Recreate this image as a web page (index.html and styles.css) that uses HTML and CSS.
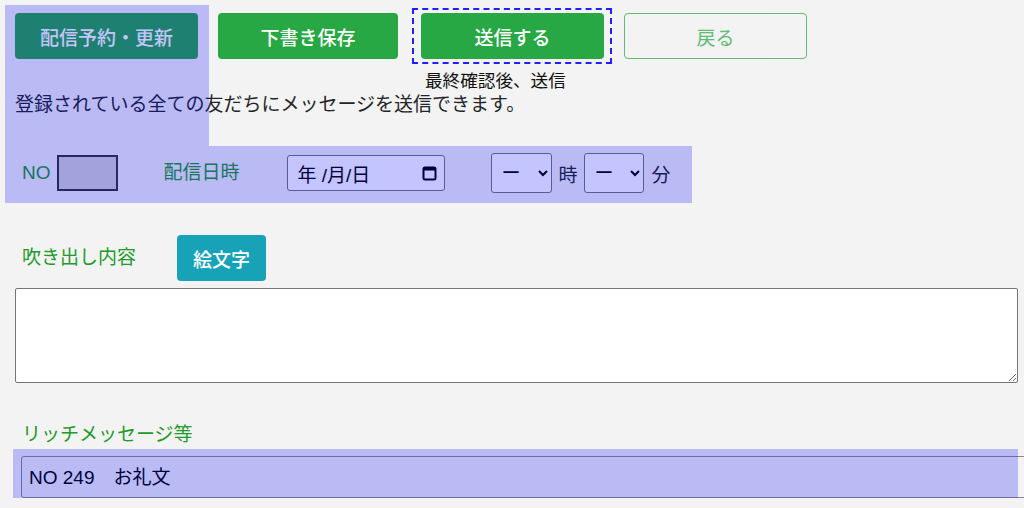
FILE: index.html
```html
<!DOCTYPE html>
<html lang="ja">
<head>
    <meta charset="UTF-8">
    <meta name="viewport" content="width=device-width, initial-scale=1.0">
    <title>メッセージ配信</title>
    <link rel="stylesheet" href="styles.css">
</head>
<body>
    <div class="page">
        <div class="actions">
            <button class="btn btn-update" type="button">配信予約・更新</button>
            <button class="btn btn-save" type="button">下書き保存</button>
            <div class="send-wrap">
                <button class="btn btn-send" type="button">送信する</button>
                <p class="send-note">最終確認後、送信</p>
            </div>
            <button class="btn btn-back" type="button" disabled>戻る</button>
        </div>

        <p class="lead">登録されている全ての友だちにメッセージを送信できます。</p>

        <div class="schedule">
            <label class="field-label" for="no">NO</label>
            <input class="no-input" type="text" id="no" disabled>
            <span class="field-label date-label">配信日時</span>
            <div class="date-field">
                <span>年 /月/日</span>
                <svg class="cal-icon" width="15" height="16" viewBox="0 0 15 16">
                    <rect x="1.5" y="2.5" width="12" height="12" rx="1.5" fill="none" stroke="#000" stroke-width="2"/>
                    <rect x="1.5" y="2.5" width="12" height="3" fill="#000"/>
                </svg>
            </div>
            <select class="time-select hour">
                <option>ー</option>
            </select>
            <span class="unit">時</span>
            <select class="time-select minute">
                <option>ー</option>
            </select>
            <span class="unit minute-unit">分</span>
        </div>

        <div class="balloon-head">
            <span class="field-label">吹き出し内容</span>
            <button class="btn btn-emoji" type="button">絵文字</button>
        </div>
        <textarea class="balloon-text"></textarea>

        <div class="field-label rich-label">リッチメッセージ等</div>
        <div class="rich-row">
            <select class="rich-select">
                <option>NO 249　お礼文</option>
            </select>
        </div>

        <!-- highlighted areas -->
        <div class="mask mask-top"></div>
        <div class="mask mask-schedule"></div>
        <div class="mask mask-rich"></div>
    </div>
</body>
</html>
```
FILE: styles.css
```css
html, body {
    margin: 0;
    overflow: hidden;
}
body {
    background-color: #f3f3f3;
    font-family: "Liberation Sans", "Noto Sans CJK JP", sans-serif;
    font-size: 19px;
    color: #212529;
}
.page {
    position: relative;
    padding: 8px 0 0 15px;
}
.actions {
    display: flex;
    align-items: center;
    height: 56px;
}
.btn {
    height: 46px;
    border: none;
    border-radius: 4px;
    font-family: "Liberation Sans", "Noto Sans CJK JP", sans-serif;
    font-size: 19px;
    font-weight: 500;
    color: #fff;
    cursor: pointer;
    padding: 0;
}
.btn-update {
    width: 183px;
    background-color: #28a745;
}
.btn-save {
    width: 180px;
    margin-left: 20px;
    background-color: #28a745;
}
.send-wrap {
    position: relative;
    box-sizing: border-box;
    width: 200px;
    height: 56px;
    margin-left: 14px;
    padding: 3px 6px 3px 7px;
    border: 2px dashed #1f1fff;
}
.btn-send {
    width: 183px;
    background-color: #28a745;
}
.send-note {
    position: absolute;
    top: 61px;
    left: 11px;
    margin: 0;
    font-size: 17.6px;
    line-height: 20px;
    font-weight: normal;
    white-space: nowrap;
    color: #111;
}
.btn-back {
    width: 183px;
    margin-left: 12px;
    background-color: transparent;
    border: 1px solid #28a745;
    color: #28a745;
    font-weight: normal;
    opacity: 0.72;
}
.lead {
    margin: 28px 0 0;
    line-height: 26px;
}
.schedule {
    display: flex;
    align-items: center;
    height: 40px;
    margin-top: 35px;
    padding-left: 7px;
}
.field-label {
    color: #229a2a;
    line-height: 26px;
}
.no-input {
    box-sizing: border-box;
    width: 61px;
    height: 36px;
    margin-left: 6px;
    background-color: #d3d3d3;
    border: 2px solid #333;
}
.date-label {
    margin-left: 46px;
}
.date-field {
    box-sizing: border-box;
    display: flex;
    align-items: center;
    justify-content: space-between;
    width: 158px;
    height: 36px;
    margin-left: 47px;
    padding: 0 7px 0 10px;
    background-color: #fff;
    border: 1px solid #767676;
    border-radius: 3px;
    color: #000;
}
.time-select {
    box-sizing: border-box;
    height: 40px;
    padding: 0 4px 0 6px;
    background-color: #fff;
    border: 1px solid #767676;
    border-radius: 3px;
    font-family: "Liberation Sans", "Noto Sans CJK JP", sans-serif;
    font-size: 19px;
    color: #000;
}
.hour {
    width: 61px;
    margin-left: 46px;
}
.minute {
    width: 60px;
}
.unit {
    margin: 0 6px 0 7px;
}
.minute-unit {
    margin: 0 0 0 8px;
}
.balloon-head {
    display: flex;
    align-items: center;
    margin-top: 42px;
    padding-left: 7px;
}
.btn-emoji {
    width: 89px;
    margin-left: 41px;
    background-color: #17a2b8;
}
.balloon-text {
    display: block;
    box-sizing: border-box;
    width: 1003px;
    height: 95px;
    margin-top: 7px;
    background-color: #fff;
    border: 1px solid #767676;
    border-radius: 2px;
}
.rich-label {
    margin-top: 39px;
    padding-left: 7px;
}
.rich-row {
    margin-top: 8px;
    padding-left: 6px;
}
.rich-select {
    box-sizing: border-box;
    width: 1040px;
    height: 42px;
    padding: 0 3px;
    background-color: transparent;
    border: 1px solid #8a8a8a;
    border-radius: 3px;
    font-family: "Liberation Sans", "Noto Sans CJK JP", sans-serif;
    font-size: 19px;
    color: #000;
}
.mask {
    position: absolute;
    background-color: rgba(0, 0, 255, 0.23);
    pointer-events: none;
}
.mask-top {
    left: 5px;
    top: 5px;
    width: 204px;
    height: 141px;
}
.mask-schedule {
    left: 5px;
    top: 146px;
    width: 687px;
    height: 57px;
}
.mask-rich {
    left: 13px;
    top: 449px;
    width: 1005px;
    height: 49px;
}
```
